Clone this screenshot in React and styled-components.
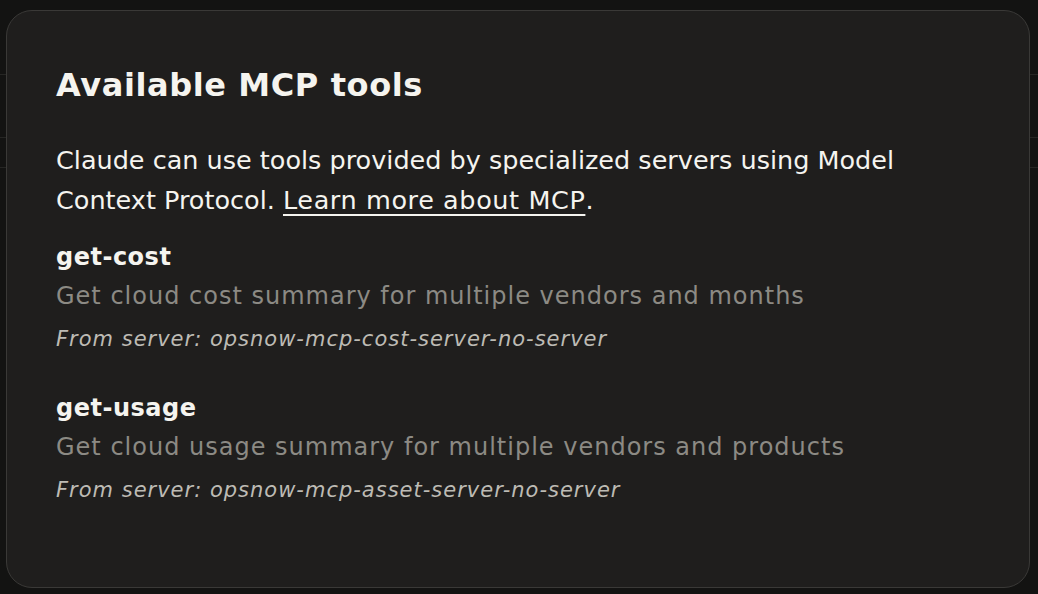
import React from 'react';
import styled, { createGlobalStyle } from 'styled-components';

const GlobalStyle = createGlobalStyle`
  html, body {
    margin: 0;
    padding: 0;
    background: #131312;
  }
  body {
    font-family: 'DejaVu Sans', 'Liberation Sans', sans-serif;
    -webkit-font-smoothing: antialiased;
  }
`;

const Page = styled.div`
  position: relative;
  width: 1038px;
  height: 594px;
  overflow: hidden;
  background: #131312;
`;

const BackRow = styled.div`
  height: ${(p) => p.h}px;
  border-bottom: 1px solid #262624;
`;

const Modal = styled.div`
  position: absolute;
  left: 6px;
  top: 10px;
  width: 1024px;
  height: 578px;
  box-sizing: border-box;
  background: #1f1e1d;
  border: 1px solid #3a3937;
  border-radius: 26px;
  padding: 52px 49px 0 49px;
  display: flex;
  flex-direction: column;
`;

const Title = styled.h2`
  margin: 0;
  font-size: 32px;
  line-height: 44px;
  font-weight: 700;
  letter-spacing: 0.6px;
  color: #f5f4ef;
`;

const Intro = styled.p`
  margin: 33px 0 0 0;
  font-size: 25.5px;
  line-height: 40px;
  color: #f5f4ef;

  a {
    color: inherit;
    letter-spacing: 0.6px;
    text-decoration: underline;
    text-underline-offset: 5px;
    text-decoration-thickness: 2px;
  }
`;

const ToolList = styled.div`
  display: flex;
  flex-direction: column;
  gap: 28px;
  margin-top: 18px;
`;

const Tool = styled.div`
  display: flex;
  flex-direction: column;
`;

const ToolName = styled.div`
  font-size: 24px;
  line-height: 38px;
  font-weight: 700;
  letter-spacing: 0.5px;
  color: #f5f4ef;
`;

const ToolDesc = styled.div`
  font-size: 24px;
  line-height: 41px;
  letter-spacing: 1px;
  color: #8c8a84;
`;

const ToolServer = styled.div`
  font-size: 21px;
  line-height: 44px;
  font-style: italic;
  letter-spacing: 1px;
  color: #bdbbb4;
`;

const tools = [
  {
    name: 'get-cost',
    desc: 'Get cloud cost summary for multiple vendors and months',
    server: 'opsnow-mcp-cost-server-no-server',
  },
  {
    name: 'get-usage',
    desc: 'Get cloud usage summary for multiple vendors and products',
    server: 'opsnow-mcp-asset-server-no-server',
  },
];

export default function App() {
  return (
    <Page>
      <GlobalStyle />
      <BackRow h={74} />
      <BackRow h={62} />
      <BackRow h={29} />
      <Modal>
        <Title>Available MCP tools</Title>
        <Intro>
          Claude can use tools provided by specialized servers using Model Context Protocol.{' '}
          <a href="#mcp">Learn more about MCP</a>.
        </Intro>
        <ToolList>
          {tools.map((t) => (
            <Tool key={t.name}>
              <ToolName>{t.name}</ToolName>
              <ToolDesc>{t.desc}</ToolDesc>
              <ToolServer>From server: {t.server}</ToolServer>
            </Tool>
          ))}
        </ToolList>
      </Modal>
    </Page>
  );
}
